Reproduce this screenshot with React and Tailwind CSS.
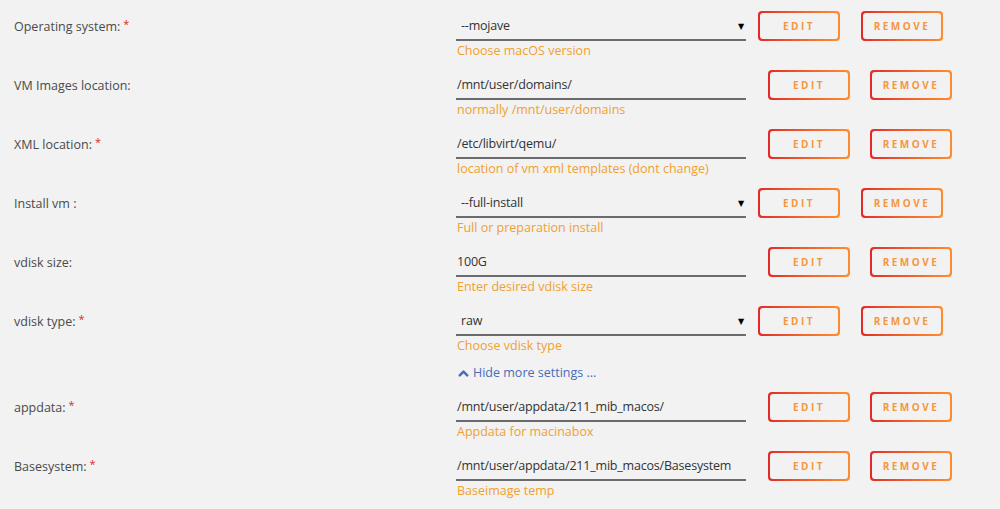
import React from 'react';
import { ChevronUp } from 'lucide-react';

const rows = [
  { label: 'Operating system:', required: true, value: '--mojave', help: 'Choose macOS version', select: true },
  { label: 'VM Images location:', value: '/mnt/user/domains/', help: 'normally /mnt/user/domains' },
  { label: 'XML location:', required: true, value: '/etc/libvirt/qemu/', help: 'location of vm xml templates (dont change)' },
  { label: 'Install vm :', value: '--full-install', help: 'Full or preparation install', select: true },
  { label: 'vdisk size:', value: '100G', help: 'Enter desired vdisk size' },
  { label: 'vdisk type:', required: true, value: 'raw', help: 'Choose vdisk type', select: true },
];

const advanced = [
  { label: 'appdata:', required: true, value: '/mnt/user/appdata/211_mib_macos/', help: 'Appdata for macinabox' },
  { label: 'Basesystem:', required: true, value: '/mnt/user/appdata/211_mib_macos/Basesystem', help: 'Baseimage temp' },
];

const GradientButton = ({ children }) => (
  <div className="p-[2px] rounded-[4px] bg-gradient-to-r from-[#e22828] to-[#ff8c2f]">
    <div className="w-[78px] h-[26px] rounded-[3px] bg-[#f2f2f2] flex items-center justify-center text-[10px] font-bold tracking-[2.5px] text-[#f6963f]">
      {children}
    </div>
  </div>
);

const SettingRow = ({ row }) => (
  <div className="flex h-[59px] pt-[11px]">
    <div className="w-[456px] pl-[14px] h-[30px] pt-[2px] flex items-center text-[12.5px] text-[#4a4a4a]">
      {row.label}
      {row.required && <span className="text-[#e22828] ml-[3px] text-[11px] -mt-[5px]">*</span>}
    </div>
    <div className="w-[290px] flex flex-col">
      <div className="h-[30px] pt-[2px] border-b-2 border-[#6b6b6b] flex items-center justify-between text-[12.5px] tracking-[-0.2px] text-[#333]">
        <span className={row.select ? 'pl-[5px]' : 'pl-px'}>{row.value}</span>
        {row.select && <span className="text-[8px] text-black pr-[2px]">▼</span>}
      </div>
      <div className="h-[18px] leading-[20px] text-[12.5px] text-[#f0a030] pl-px">{row.help}</div>
    </div>
    <div className={`flex h-[30px] ${row.select ? 'ml-[12px] gap-[21px]' : 'ml-[22px] gap-[20px]'}`}>
      <GradientButton>EDIT</GradientButton>
      <GradientButton>REMOVE</GradientButton>
    </div>
  </div>
);

export default function App() {
  return (
    <div className="w-[1000px] h-[509px] overflow-hidden bg-[#f2f2f2]" style={{ fontFamily: '"Open Sans", "DejaVu Sans", sans-serif' }}>
      {rows.map((row) => (
        <SettingRow key={row.label} row={row} />
      ))}
      <div className="h-[27px] pt-[10px] pl-[456px]">
        <div className="flex items-center h-[18px] text-[12.5px] text-[#486dba] cursor-pointer">
          <ChevronUp size={15} strokeWidth={4} className="mr-[2px]" />
          Hide more settings ...
        </div>
      </div>
      {advanced.map((row) => (
        <SettingRow key={row.label} row={row} />
      ))}
    </div>
  );
}
